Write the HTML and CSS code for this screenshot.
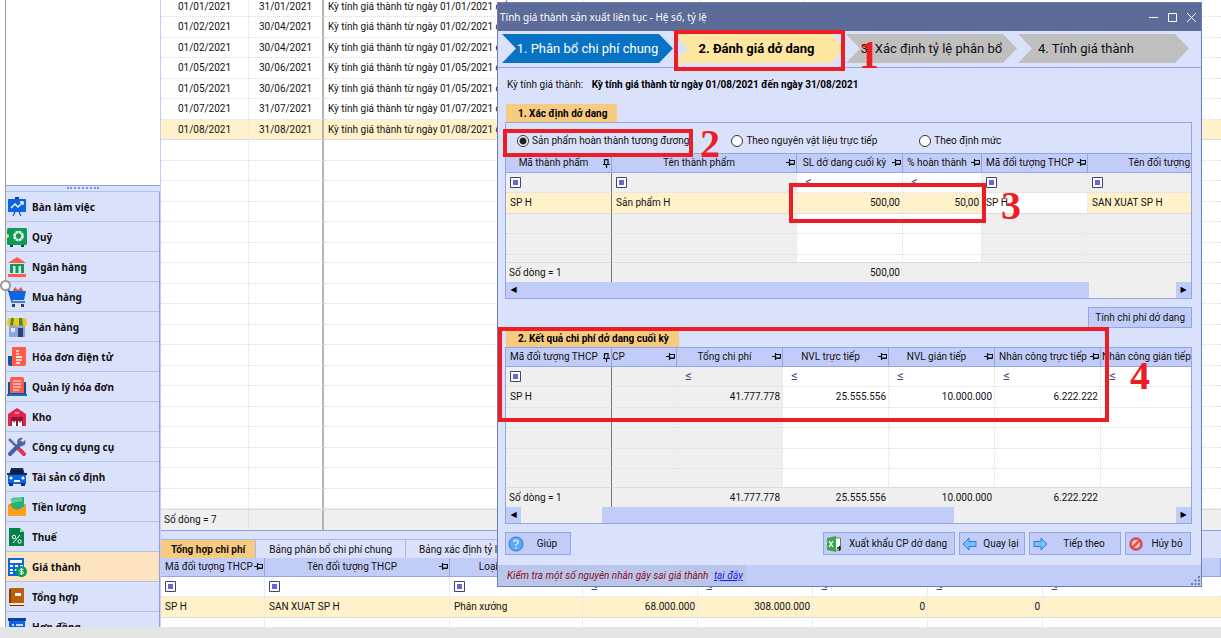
FILE: index.html
```html
<!DOCTYPE html>
<html lang="vi">
<head>
  <meta charset="utf-8">
  <title>Tính giá thành</title>
  <link rel="stylesheet" href="styles.css">
</head>
<body>

  <svg class="defs" width="0" height="0">
    <symbol id="pin" viewBox="0 0 9 7">
      <path d="M0 3.5h3M3.5 0v7M4 1.5h4.5v3.5H4M4 5.5h4.5" fill="none" stroke="#111" stroke-width="1.2"/>
    </symbol>
    <symbol id="pin-down" viewBox="0 0 7 9">
      <path d="M1.5 0v5M1.5 .6h4M5 0v5M0 5.5h7M3.5 6v3" fill="none" stroke="#111" stroke-width="1.2"/>
    </symbol>
    <symbol id="filter" viewBox="0 0 11 11">
      <path d="M.5.5h10v10H.5z" fill="#fff" stroke="#43437a"/>
      <path d="M3 3h5v5H3z" fill="#6666d6"/>
    </symbol>
  </svg>

  <div class="app">
    <aside class="sidebar">
      <div class="tree"></div>
      <div class="grip"><span></span></div>
      <nav>
        <a href="#"><svg width="20" height="20" viewBox="0 0 20 20"><path d="M1 2h18v13H1z" fill="#0b66e4"/><path d="M8 0h4v2H8z" fill="#1b3f86"/><path d="M4 11l4-4 3 3 5-5M13 5h3v3" fill="none" stroke="#fff" stroke-width="1.3"/><path d="M8 15l-2 4M12 15l2 4" stroke="#2b569c" stroke-width="1.3"/></svg>Bàn làm việc</a>
        <a href="#"><svg width="20" height="20" viewBox="0 0 20 20"><path d="M3 17h3v3H3zM14 17h3v3h-3z" fill="#0b4a33"/><rect x="0" y="1" width="20" height="17" rx="1.5" fill="#0c9a55"/><circle cx="11.500" cy="9" r="4" fill="none" stroke="#fff" stroke-width="2.600" stroke-dasharray="2.500 .6"/><circle cx="0" cy="9" r="2" fill="#ffe23a"/></svg>Quỹ</a>
        <a href="#"><svg width="20" height="20" viewBox="0 0 20 20"><path d="M10 0l9 6H1z" fill="#ff5b48"/><path d="M3 7h14v2H3z" fill="#0c9a55"/><path d="M3 9h3v7H3zM8.500 9h3v7h-3zM14 9h3v7h-3z" fill="#0c9a55"/><path d="M1 17h18v3H1z" fill="#ff5b48"/></svg>Ngân hàng</a>
        <a href="#"><svg width="20" height="20" viewBox="0 0 20 20"><path d="M5 5l3-5 3 3 3-3 3 5z" fill="#d9574d"/><path d="M1 4h18l-2 9H4z" fill="#0b66e4"/><path d="M0 3h2l3 12h13" fill="none" stroke="#1658d8" stroke-width="1.3"/><path d="M5 17h3v3H5zM14 17h3v3h-3z" fill="#2c3d74"/></svg>Mua hàng</a>
        <a href="#"><svg width="20" height="20" viewBox="0 0 20 20"><path d="M2 8h16v12H2z" fill="#8fa3d8"/><path d="M11 11h5v9h-5z" fill="#2a417e"/><path d="M4 11h4v4H4z" fill="#dfe7ff"/><path d="M1 1h18l1 6-2 3-2-2-2 2-2-2-2 2-2-2-2 2-2-2-2 2-2-3z" fill="#f4c51e"/><path d="M4 1h3l-1 8-2-1-1 1zM12 1h3l1 7-2 1-2-1z" fill="#3d8f3a"/></svg>Bán hàng</a>
        <a href="#"><svg width="20" height="20" viewBox="0 0 20 20"><path d="M1 9h5v10H3q-2 0-2-2z" fill="#17519c"/><path d="M5 0h14v17q0 2-2 2H5z" fill="#ff5b48"/><path d="M9 4h3M9 7h3M9 10h6M9 13h6M9 16h4" stroke="#fff" stroke-width="1.3"/></svg>Hóa đơn điện tử</a>
        <a href="#"><svg width="20" height="20" viewBox="0 0 20 20"><path d="M1 5h18v13H1z" fill="#174c93"/><path d="M0 17h20v2H0z" fill="#0a72c9"/><path d="M4 0h12q2 2 1 5v11H3V5q-1-3 1-5z" fill="#ff5b48"/><path d="M6 4h8M6 7h8M6 10h8M6 13h6" stroke="#fff" stroke-width="1.200"/></svg>Quản lý hóa đơn</a>
        <a href="#"><svg width="20" height="20" viewBox="0 0 20 20"><path d="M10 1l9 6v12H1V7z" fill="#e4264b"/><path d="M8 5h4v2H8z" fill="#ff91a4"/><path d="M4 10h12v9H4z" fill="#8d1638"/><path d="M5 14h4v5H5zM11 14h4v5h-4z" fill="#fff"/><path d="M6 14l1 2 1-2M12 14l1 2 1-2" fill="#8d1638"/></svg>Kho</a>
        <a href="#"><svg width="20" height="20" viewBox="0 0 20 20"><path d="M2 2l10 10" stroke="#5c6f9c" stroke-width="2.500"/><path d="M12 12l5 5" stroke="#df3556" stroke-width="4" stroke-linecap="round"/><path d="M3 17L14 6" stroke="#3f5fae" stroke-width="4" stroke-linecap="round"/><path d="M18 3l-3 3-2-2 3-3q-5-1-6 4 1 5 5 4 5-1 3-6z" fill="#4e689f"/></svg>Công cụ dụng cụ</a>
        <a href="#"><svg width="20" height="20" viewBox="0 0 20 20"><path d="M4 1h12l2 7H2z" fill="#12315f"/><path d="M5 3h10l1 4H4z" fill="#0a1e40"/><path d="M1 8h18v9H1z" fill="#0b66e4"/><path d="M0 6h3v2H0zM17 6h3v2h-3z" fill="#12315f"/><path d="M2 16h4v3H2zM14 16h4v3h-4z" fill="#12315f"/><path d="M7 13h6v2H7z" fill="#fff"/><circle cx="4" cy="11" r="1.500" fill="#fff"/><circle cx="16" cy="11" r="1.500" fill="#fff"/></svg>Tài sản cố định</a>
        <a href="#"><svg width="20" height="20" viewBox="0 0 20 20"><path d="M1 8l9-5 9 5v11H1z" fill="#e8860b"/><path d="M5 1l12-1v12H5z" fill="#27b079"/><path d="M3 2l12-1v3L5 6z" fill="#5dd09c"/><path d="M1 8l9 6 9-6v11H1z" fill="#ff9f1c"/></svg>Tiền lương</a>
        <a href="#"><svg width="20" height="20" viewBox="0 0 20 20"><path d="M2 1h11l4 4v14H2z" fill="#078246"/><path d="M13 1v4h4z" fill="#7fe0ad"/><path d="M13 8L6 16" stroke="#fff"/><circle cx="7" cy="10" r="1.700" fill="none" stroke="#fff"/><circle cx="12.500" cy="14.500" r="1.700" fill="none" stroke="#fff"/></svg>Thuế</a>
        <a href="#" class="active"><svg width="20" height="20" viewBox="0 0 20 20"><path d="M1 1h16v18H1z" fill="#0b66e4"/><path d="M3 3h12v3H3z" fill="#fff"/><path d="M3 9h3M8 9h3M13 9h3M3 13h3M8 13h2M3 16h3" stroke="#fff" stroke-width="2"/><circle cx="14.500" cy="14.500" r="5.500" fill="#0c9a55"/><path d="M16.500 12.500q-4-1-4 .8t2 1.200 2 1.400-4 .8M14.500 11v7" fill="none" stroke="#fff"/></svg>Giá thành</a>
        <a href="#"><svg width="20" height="20" viewBox="0 0 20 20"><path d="M3 1h14v18H3q-1-1-1-2V2z" fill="#b8600b"/><path d="M2 16h15v3H3z" fill="#f7e7ce"/><path d="M3 18h14v1H3z" fill="#7a2b0c"/><path d="M2 2h2v14H2z" fill="#8b3a0a"/><path d="M8 6h6v3H8z" fill="#fff"/></svg>Tổng hợp</a>
        <a href="#"><svg width="20" height="20" viewBox="0 0 20 20"><path d="M2 1h16v18H2z" fill="#0b66e4"/><path d="M1 1h18v3H1z" fill="#12418e"/><path d="M5 8h2M9 8h7M5 11h2M9 11h7M5 14h2" stroke="#fff" stroke-width="1.300"/></svg>Hợp đồng</a>
      </nav>
      <span class="handle"></span>
    </aside>

    <main class="main">
      <div class="periods">
        <table class="grid">
          <colgroup><col class="w-88"><col class="w-75"><col class="w-260"><col class="w-116"><col class="w-105"><col></colgroup>
          <tbody>
            <tr><td>01/01/2021</td><td>31/01/2021</td><td>Kỳ tính giá thành từ ngày 01/01/2021 đến ngày 31/01/2021</td><td>1.000.700.000</td><td>1.000.700.400</td><td></td></tr>
            <tr><td>01/02/2021</td><td>30/04/2021</td><td>Kỳ tính giá thành từ ngày 01/02/2021 đến ngày 30/04/2021</td><td></td><td></td><td></td></tr>
            <tr><td>01/02/2021</td><td>30/04/2021</td><td>Kỳ tính giá thành từ ngày 01/02/2021 đến ngày 30/04/2021</td><td></td><td></td><td></td></tr>
            <tr><td>01/05/2021</td><td>30/06/2021</td><td>Kỳ tính giá thành từ ngày 01/05/2021 đến ngày 30/06/2021</td><td></td><td></td><td></td></tr>
            <tr><td>01/05/2021</td><td>30/06/2021</td><td>Kỳ tính giá thành từ ngày 01/05/2021 đến ngày 30/06/2021</td><td></td><td></td><td></td></tr>
            <tr><td>01/07/2021</td><td>31/07/2021</td><td>Kỳ tính giá thành từ ngày 01/07/2021 đến ngày 31/07/2021</td><td></td><td></td><td></td></tr>
            <tr class="selected"><td>01/08/2021</td><td>31/08/2021</td><td>Kỳ tính giá thành từ ngày 01/08/2021 đến ngày 31/08/2021</td><td></td><td></td><td></td></tr>
            <tr><td></td><td></td><td></td><td></td><td></td><td></td></tr>
            <tr><td></td><td></td><td></td><td></td><td></td><td></td></tr>
            <tr><td></td><td></td><td></td><td></td><td></td><td></td></tr>
            <tr><td></td><td></td><td></td><td></td><td></td><td></td></tr>
            <tr><td></td><td></td><td></td><td></td><td></td><td></td></tr>
            <tr><td></td><td></td><td></td><td></td><td></td><td></td></tr>
            <tr><td></td><td></td><td></td><td></td><td></td><td></td></tr>
            <tr><td></td><td></td><td></td><td></td><td></td><td></td></tr>
            <tr><td></td><td></td><td></td><td></td><td></td><td></td></tr>
            <tr><td></td><td></td><td></td><td></td><td></td><td></td></tr>
            <tr><td></td><td></td><td></td><td></td><td></td><td></td></tr>
            <tr><td></td><td></td><td></td><td></td><td></td><td></td></tr>
            <tr><td></td><td></td><td></td><td></td><td></td><td></td></tr>
            <tr><td></td><td></td><td></td><td></td><td></td><td></td></tr>
            <tr><td></td><td></td><td></td><td></td><td></td><td></td></tr>
            <tr><td></td><td></td><td></td><td></td><td></td><td></td></tr>
            <tr><td></td><td></td><td></td><td></td><td></td><td></td></tr>
            <tr><td></td><td></td><td></td><td></td><td></td><td></td></tr>
          </tbody>
        </table>
      </div>
      <div class="periods-foot"><span>Số dòng = 7</span><span></span></div>

      <div class="tabs">
        <button class="tab active">Tổng hợp chi phí</button>
        <button class="tab">Bảng phân bổ chi phí chung</button>
        <button class="tab">Bảng xác định tỷ lệ phân bổ</button>
      </div>
      <table class="grid detail">
        <colgroup><col class="w-104"><col class="w-185"><col class="w-133"><col class="w-115"><col class="w-115"><col class="w-115"><col class="w-115"><col></colgroup>
        <thead>
          <tr>
            <th>Mã đối tượng THCP <svg width="9" height="7"><use href="#pin"/></svg></th>
            <th>Tên đối tượng THCP <svg width="9" height="7"><use href="#pin"/></svg></th>
            <th>Loại đối tượng <svg width="9" height="7"><use href="#pin"/></svg></th>
            <th></th><th></th><th></th><th></th><th></th>
          </tr>
        </thead>
        <tbody>
          <tr class="filter">
            <td><svg width="11" height="11"><use href="#filter"/></svg></td>
            <td><svg width="11" height="11"><use href="#filter"/></svg></td>
            <td><svg width="11" height="11"><use href="#filter"/></svg></td>
            <td><i>≤</i></td><td><i>≤</i></td><td><i>≤</i></td><td><i>≤</i></td><td><i>≤</i></td>
          </tr>
          <tr class="selected"><td>SP H</td><td>SAN XUAT SP H</td><td>Phân xưởng</td><td class="num">68.000.000</td><td class="num">308.000.000</td><td class="num">0</td><td class="num">0</td><td></td></tr>
          <tr class="cut"><td></td><td></td><td></td><td></td><td></td><td></td><td></td><td></td></tr>
        </tbody>
      </table>
    </main>
  </div>
  <div class="bottom-bar"></div>

  <section class="window">
    <header class="titlebar">
      <h1>Tính giá thành sản xuất liên tục - Hệ số, tỷ lệ</h1>
      <button aria-label="Thu nhỏ"><svg width="11" height="11"><path d="M1 5.500h9" stroke="#fff"/></svg></button>
      <button aria-label="Phóng to"><svg width="11" height="11"><path d="M1.500 1.500h8v8h-8z" fill="none" stroke="#fff"/></svg></button>
      <button aria-label="Đóng"><svg width="11" height="11"><path d="M1 1l9 9M10 1l-9 9" stroke="#fff"/></svg></button>
    </header>

    <div class="steps">
      <div class="step done">1. Phân bổ chi phí chung</div>
      <div class="step current">2. Đánh giá dở dang</div>
      <div class="step">3. Xác định tỷ lệ phân bổ</div>
      <div class="step last">4. Tính giá thành</div>
    </div>

    <div class="body">
      <p class="period">Kỳ tính giá thành: <b>Kỳ tính giá thành từ ngày 01/08/2021 đến ngày 31/08/2021</b></p>

      <h2 class="caption">1. Xác định dở dang</h2>
      <div class="panel">
        <div class="methods">
          <label><input type="radio" name="method" checked>Sản phẩm hoàn thành tương đương</label>
          <label><input type="radio" name="method">Theo nguyên vật liệu trực tiếp</label>
          <label><input type="radio" name="method">Theo định mức</label>
        </div>
        <table class="grid wip">
          <colgroup><col class="w-106"><col class="w-185"><col class="w-106"><col class="w-79"><col class="w-106"><col></colgroup>
          <thead>
            <tr>
              <th>Mã thành phẩm <svg width="7" height="9"><use href="#pin-down"/></svg></th>
              <th>Tên thành phẩm <svg width="9" height="7"><use href="#pin"/></svg></th>
              <th>SL dở dang cuối kỳ <svg width="9" height="7"><use href="#pin"/></svg></th>
              <th>% hoàn thành <svg width="9" height="7"><use href="#pin"/></svg></th>
              <th>Mã đối tượng THCP <svg width="9" height="7"><use href="#pin"/></svg></th>
              <th class="clipped">Tên đối tượng</th>
            </tr>
          </thead>
          <tbody>
            <tr class="filter">
              <td class="ro"><svg width="11" height="11"><use href="#filter"/></svg></td>
              <td class="ro"><svg width="11" height="11"><use href="#filter"/></svg></td>
              <td><i>≤</i></td>
              <td><i>≤</i></td>
              <td class="ro"><svg width="11" height="11"><use href="#filter"/></svg></td>
              <td class="ro"><svg width="11" height="11"><use href="#filter"/></svg></td>
            </tr>
            <tr class="selected"><td>SP H</td><td>Sản phẩm H</td><td class="num">500,00</td><td class="num">50,00</td><td class="focus">SP H</td><td>SAN XUAT SP H</td></tr>
            <tr><td class="ro"></td><td class="ro"></td><td></td><td></td><td class="ro"></td><td class="ro"></td></tr>
            <tr><td class="ro"></td><td class="ro"></td><td></td><td></td><td class="ro"></td><td class="ro"></td></tr>
            <tr class="cut"><td class="ro"></td><td class="ro"></td><td></td><td></td><td class="ro"></td><td class="ro"></td></tr>
          </tbody>
          <tfoot>
            <tr><td>Số dòng = 1</td><td></td><td class="num">500,00</td><td></td><td></td><td></td></tr>
          </tfoot>
        </table>
        <div class="scroll">
          <button aria-label="Trái">◀</button>
          <span class="thumb wide"></span>
          <span class="track"></span>
          <button aria-label="Phải">▶</button>
        </div>
      </div>

      <div class="calc"><button class="btn">Tính chi phí dở dang</button></div>

      <h2 class="caption result">2. Kết quả chi phí dở dang cuối kỳ</h2>
      <div class="panel">
        <table class="grid cost">
          <colgroup><col class="w-106"><col class="w-65"><col class="w-106"><col class="w-106"><col class="w-106"><col class="w-106"><col></colgroup>
          <thead>
            <tr>
              <th>Mã đối tượng THCP <svg width="7" height="9"><use href="#pin-down"/></svg></th>
              <th class="behind">CP <svg width="9" height="7"><use href="#pin"/></svg></th>
              <th>Tổng chi phí <svg width="9" height="7"><use href="#pin"/></svg></th>
              <th>NVL trực tiếp <svg width="9" height="7"><use href="#pin"/></svg></th>
              <th>NVL gián tiếp <svg width="9" height="7"><use href="#pin"/></svg></th>
              <th>Nhân công trực tiếp <svg width="9" height="7"><use href="#pin"/></svg></th>
              <th class="clipped">Nhân công gián tiếp</th>
            </tr>
          </thead>
          <tbody>
            <tr class="filter">
              <td class="ro"><svg width="11" height="11"><use href="#filter"/></svg></td>
              <td class="ro"></td>
              <td class="ro"><i>≤</i></td><td><i>≤</i></td><td><i>≤</i></td><td><i>≤</i></td><td><i>≤</i></td>
            </tr>
            <tr><td class="ro">SP H</td><td class="ro"></td><td class="ro num">41.777.778</td><td class="num">25.555.556</td><td class="num">10.000.000</td><td class="num">6.222.222</td><td></td></tr>
            <tr><td class="ro"></td><td class="ro"></td><td class="ro"></td><td></td><td></td><td></td><td></td></tr>
            <tr><td class="ro"></td><td class="ro"></td><td class="ro"></td><td></td><td></td><td></td><td></td></tr>
            <tr><td class="ro"></td><td class="ro"></td><td class="ro"></td><td></td><td></td><td></td><td></td></tr>
            <tr class="short"><td class="ro"></td><td class="ro"></td><td class="ro"></td><td></td><td></td><td></td><td></td></tr>
          </tbody>
          <tfoot>
            <tr><td>Số dòng = 1</td><td></td><td class="num">41.777.778</td><td class="num">25.555.556</td><td class="num">10.000.000</td><td class="num">6.222.222</td><td></td></tr>
          </tfoot>
        </table>
        <div class="scroll">
          <button aria-label="Trái">◀</button>
          <span class="track before"></span>
          <span class="thumb"></span>
          <span class="track"></span>
          <button aria-label="Phải">▶</button>
        </div>
      </div>

      <div class="actions">
        <button class="btn help"><svg width="16" height="16" viewBox="0 0 16 16"><circle cx="8" cy="8" r="7" fill="#5ba7f7" stroke="#2b7ad6"/><path d="M5.800 6.200q0-2.200 2.200-2.200t2.200 2q0 1.300-2.200 2.700v1M8 11v1.500" fill="none" stroke="#fff" stroke-width="1.200"/></svg><span>Giúp</span></button>
        <button class="btn export"><svg width="16" height="16" viewBox="0 0 16 16"><path d="M8 2h6.500v12H8z" fill="#fff" stroke="#4a8f52"/><path d="M1 2l9-2v16l-9-2z" fill="#3fa64b"/><path d="M3 5l4 6M7 5l-4 6" stroke="#fff" stroke-width="1.300"/><path d="M11 12h4M13.500 10v5" stroke="#222" stroke-width="1.300"/></svg><span>Xuất khẩu CP dở dang</span></button>
        <button class="btn back"><svg width="16" height="16" viewBox="0 0 16 16"><path d="M1 8l6-6v3.500h7v5H7V14z" fill="#7cc0fb" stroke="#2b7ad6"/></svg><span>Quay lại</span></button>
        <button class="btn next"><svg width="16" height="16" viewBox="0 0 16 16"><path d="M15 8L9 2v3.500H2v5h7V14z" fill="#7cc0fb" stroke="#2b7ad6"/></svg><span>Tiếp theo</span></button>
        <button class="btn cancel"><svg width="16" height="16" viewBox="0 0 16 16"><circle cx="8" cy="8" r="5.500" fill="#f2c5cd" stroke="#dc4a50" stroke-width="2.600"/><path d="M4 12l8-8" stroke="#dc4a50" stroke-width="2.400"/></svg><span>Hủy bỏ</span></button>
      </div>
    </div>

    <footer class="status">
      <span>Kiểm tra một số nguyên nhân gây sai giá thành <a href="#">tại đây</a></span>
      <svg width="10" height="10"><path d="M7 0h2v2H7zM3.500 3.500h2v2h-2zM7 3.500h2v2H7zM0 7h2v2H0zM3.500 7h2v2h-2zM7 7h2v2H7z" fill="#6b7bb4"/></svg>
    </footer>

    <!-- callouts over the window -->
    <div class="mark mark-1"></div><div class="digit digit-1">1</div>
    <div class="mark mark-2"></div><div class="digit digit-2">2</div>
    <div class="mark mark-3"></div><div class="digit digit-3">3</div>
    <div class="mark mark-4"></div><div class="digit digit-4">4</div>
  </section>

</body>
</html>
```
FILE: styles.css
```css
* {
  box-sizing: border-box;
}

body {
  margin: 0;
  height: 100vh;
  display: flex;
  flex-direction: column;
  position: relative;
  overflow: hidden;
  background: #fff;
  color: #111;
  font-family: Roboto, "Liberation Sans", sans-serif;
  font-size: 10px;
  line-height: 14px;
}

button {
  margin: 0;
  padding: 0;
  border: 0;
  background: none;
  color: inherit;
  font: inherit;
}

.defs {
  position: absolute;
}

.app {
  flex: 1;
  min-height: 0;
  display: flex;
  padding-left: 5px;
}

.bottom-bar {
  flex: none;
  height: 11px;
  background: #e5e5e5;
}

/* sidebar */
.sidebar {
  position: relative;
  flex: none;
  width: 155px;
  display: flex;
  flex-direction: column;
  border-left: 1px solid #9a9a9a;
}

.tree {
  flex: none;
  height: 185px;
}

.grip {
  flex: none;
  height: 6px;
  display: flex;
  justify-content: center;
  border-top: 1px solid #8ea0e2;
  background: #dae1fb;
}

.grip span {
  width: 32px;
  height: 4px;
  margin-top: 1px;
  border-top: 2px dotted #7f92d8;
}

nav {
  flex: 1;
  min-height: 0;
  overflow: hidden;
  background: #dae1fb;
  border-top: 1px solid #b3c1ef;
  border-right: 1px solid #8ea0e2;
}

nav a {
  display: flex;
  align-items: center;
  gap: 5px;
  height: 30px;
  padding-left: 1px;
  border-bottom: 1px solid #b3c1ef;
  color: #111;
  font-family: "Noto Sans", sans-serif;
  font-size: 10px;
  font-weight: bold;
  text-decoration: none;
}

nav a.active {
  background: #fbe4bf;
}

.handle {
  position: absolute;
  left: -6px;
  top: 280px;
  width: 11px;
  height: 11px;
  border: 2px solid #999;
  border-radius: 50%;
  background: #fff;
}

/* data grids */
.grid {
  width: 100%;
  table-layout: fixed;
  border-collapse: separate;
  border-spacing: 0;
}

.w-65 { width: 65px; }
.w-75 { width: 75px; }
.w-79 { width: 79px; }
.w-88 { width: 88px; }
.w-104 { width: 104px; }
.w-105 { width: 105px; }
.w-106 { width: 106px; }
.w-115 { width: 115px; }
.w-116 { width: 116px; }
.w-133 { width: 133px; }
.w-185 { width: 185px; }
.w-260 { width: 260px; }

.grid td,
.grid th {
  padding: 0 4px;
  overflow: hidden;
  white-space: nowrap;
}

.grid td {
  height: 21px;
  border-right: 1px solid #ececec;
  border-bottom: 1px dotted #dcdcdc;
  background: #fff;
}

.grid td:last-child {
  border-right: 0;
}

.grid tr:nth-child(odd) td {
  height: 20px;
}

.grid th {
  position: relative;
  height: 19px;
  padding: 0 14px 0 4px;
  border-right: 1px solid #93a5e4;
  border-bottom: 1px solid #93a5e4;
  background: #c1cdf8;
  font-weight: normal;
}

.grid th svg {
  position: absolute;
  right: 1px;
  top: 5px;
}

.grid th.clipped {
  padding: 0 1px;
  text-align: right;
  border-right: 0;
}

.grid th.behind {
  padding-left: 0;
  text-align: left;
}

.grid .selected td {
  background: #fff2cb;
  border-bottom-style: solid;
}

.grid .selected .focus {
  background: #fff;
}

.grid td.ro,
.grid tfoot td {
  background: #efefef;
}

.grid tfoot tr td {
  height: 20px;
  border-top: 1px solid #dcdcdc;
  border-bottom: 0;
}

.grid tfoot td:first-child {
  padding-left: 3px;
}

.grid .num {
  padding-right: 2px;
  text-align: right;
}

.grid tbody tr.cut td {
  height: 7px;
  border-bottom: 0;
}

.grid tbody tr.short td {
  height: 18px;
  border-bottom: 0;
}

.filter svg {
  display: block;
}

.filter i {
  padding-left: 4px;
  color: #43437a;
  font-size: 13px;
  font-style: normal;
}

/* background screen */
.main {
  flex: 1;
  min-width: 0;
  display: flex;
  flex-direction: column;
  border-left: 1px solid #c5cff5;
}

.periods {
  flex: 1;
  min-height: 0;
  overflow: hidden;
}

.periods .grid {
  margin-top: -3px;
}

.periods td:nth-child(-n+2) {
  text-align: center;
}

.periods td:nth-child(2) {
  padding-left: 0;
  padding-right: 0;
  border-right: 2px solid #b4b4b4;
}

.periods td:nth-child(n+4) {
  text-align: right;
}

.periods-foot {
  flex: none;
  display: flex;
  height: 22px;
  border-top: 1px solid #dcdcdc;
  border-bottom: 1px solid #8ea0e2;
  background: #efefef;
  line-height: 20px;
}

.periods-foot span:first-child {
  width: 88px;
  padding-left: 3px;
  border-right: 1px solid #e2e2e2;
}

.periods-foot span:last-child {
  width: 75px;
  border-right: 2px solid #b4b4b4;
}

.tabs {
  flex: none;
  display: flex;
  padding-top: 8px;
  background: #dae1fb;
}

.tab {
  height: 19px;
  padding: 1px 13px 0;
  border-top: 1px solid #a9b8ec;
  border-right: 1px solid #a9b8ec;
  white-space: nowrap;
}

.tab.active {
  padding: 1px 10px 0;
  background: #f6cb80;
  font-weight: bold;
}

.detail {
  flex: none;
}

.grid.detail tbody tr.cut td {
  height: 9px;
}

/* window */
.window {
  position: absolute;
  left: 497px;
  right: 19px;
  top: 2px;
  border: 1px solid #6f7fb5;
  background: #dae1fb;
}

.titlebar {
  display: flex;
  align-items: center;
  gap: 8px;
  height: 28px;
  padding: 0 4px 0 2px;
  background: #5d6b99;
  color: #fff;
}

.titlebar h1 {
  flex: 1;
  margin: 0;
  font-family: "Noto Sans", sans-serif;
  font-size: 10px;
  font-weight: normal;
}

.titlebar svg {
  display: block;
}

.steps {
  display: grid;
  grid-template-columns: repeat(4, 1fr);
  gap: 1px;
  height: 37px;
  padding: 3px 12px 4px 4px;
  border-bottom: 1px solid #93a5e4;
}

.step {
  background: #bfbfbf;
  clip-path: polygon(0 0, calc(100% - 14px) 0, 100% 50%, calc(100% - 14px) 100%, 0 100%, 14px 50%);
  font-size: 13px;
  line-height: 29px;
  text-align: center;
  white-space: nowrap;
}

.step.done {
  background: #0873c4;
  color: #fff;
}

.step.current {
  padding-right: 6px;
  background: #ffe6a1;
  color: #000;
  font-weight: bold;
}

.step.last {
  padding-left: 20px;
  text-align: left;
}

.body {
  padding: 10px 9px 10px 7px;
}

.period {
  margin: 0 0 12px 2px;
}

.period b {
  padding-left: 6px;
  color: #000;
}

.caption {
  width: max-content;
  height: 18px;
  margin: 0 0 0 1px;
  padding: 0 10px 0 12px;
  background: #f6cb80;
  color: #000;
  font-size: 10px;
  line-height: 19px;
}

.panel {
  border: 1px solid #93a5e4;
}

.methods {
  display: flex;
  align-items: center;
  height: 31px;
  padding: 6px 0 0 11px;
  border-bottom: 1px solid #93a5e4;
}

.methods label {
  display: flex;
  align-items: center;
  gap: 3px;
  margin-right: 42px;
}

.methods input {
  appearance: none;
  width: 12px;
  height: 12px;
  margin: 0;
  border: 1px solid #333;
  border-radius: 50%;
  background: #fff;
}

.methods input:checked {
  background: radial-gradient(#222 0 3px, #fff 4px);
}

.wip td:first-child,
.cost td:first-child {
  border-right-color: #777;
}

.scroll {
  display: flex;
  height: 16px;
  background: #c1cdf8;
}

.scroll button {
  width: 15px;
  color: #000;
  font-family: "DejaVu Sans", sans-serif;
  font-size: 8px;
  line-height: 16px;
}

.track {
  flex: 1;
  background: #efefef;
}

.track.before {
  flex: none;
  width: 81px;
}

.thumb {
  width: 352px;
}

.thumb.wide {
  width: 568px;
}

.btn {
  display: flex;
  align-items: center;
  justify-content: center;
  height: 23px;
  border: 1px solid #93a5e4;
  background: #c1cdf8;
  white-space: nowrap;
}

.btn svg {
  flex: none;
  margin-left: 2px;
}

.btn span {
  flex: 1;
  text-align: center;
}

.calc {
  display: flex;
  justify-content: flex-end;
  padding: 8px 0 1px;
}

.calc .btn {
  height: 21px;
  padding: 0 6px;
}

.actions {
  display: flex;
  gap: 4px;
  padding: 8px 1px 0 0;
}

.help,
.back,
.cancel {
  width: 66px;
}

.help {
  margin-right: auto;
}

.export {
  width: 132px;
}

.next {
  width: 92px;
}

.status {
  display: flex;
  justify-content: space-between;
  align-items: flex-end;
  height: 21px;
  background: #c1cdf8;
  color: #8b1020;
  font-style: italic;
}

.status span {
  padding: 0 3px 0 9px;
  background: #b9c5ea;
  line-height: 21px;
}

.status a {
  padding-left: 3px;
  color: #1818e8;
}

/* callouts */
.mark {
  position: absolute;
  border: 4px solid #ee1c25;
}

.mark-1 { left: 176px; top: 27px; width: 171px; height: 41px; }
.mark-2 { left: 5px; top: 126px; width: 190px; height: 28px; }
.mark-3 { left: 291px; top: 180px; width: 197px; height: 40px; }
.mark-4 { left: 0; top: 324px; width: 611px; height: 95px; }

.digit {
  position: absolute;
  color: #ee1c25;
  font-family: "Liberation Serif", serif;
  font-size: 40px;
  font-weight: bold;
  line-height: 40px;
}

.digit-1 { left: 361px; top: 32px; }
.digit-2 { left: 202px; top: 121px; }
.digit-3 { left: 503px; top: 183px; }
.digit-4 { left: 632px; top: 353px; }
```
